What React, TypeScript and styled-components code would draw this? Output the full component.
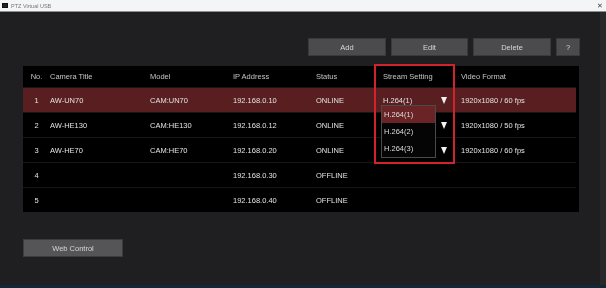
import React from "react";
import styled, { createGlobalStyle } from "styled-components";

const Global = createGlobalStyle`
  html, body { margin: 0; padding: 0; background: #1f1f21; }
  body { font-family: "Liberation Sans", Arial, sans-serif; -webkit-font-smoothing: antialiased; }
  * { box-sizing: border-box; }
`;

const Window = styled.div`
  width: 606px;
  height: 288px;
  display: flex;
  flex-direction: column;
  background: #1f1f21;
  overflow: hidden;
  will-change: transform;
`;

const TitleBar = styled.div`
  height: 12px;
  flex: none;
  display: flex;
  align-items: center;
  padding: 0 3px 0 2px;
  background: #f3f5f7;
  border-bottom: 1px solid #8e8e90;
`;

const AppIcon = styled.div`
  width: 6px;
  height: 5px;
  background: #222;
  border: 1px solid #111;
  margin-right: 3px;
`;

const TitleText = styled.span`
  font-size: 5.5px;
  color: #777;
  flex: 1;
`;

const CloseGlyph = styled.span`
  font-size: 7px;
  color: #444;
  line-height: 1;
`;

const Main = styled.div`
  flex: 1;
  display: flex;
  flex-direction: column;
  padding: 26px 21px 0 23px;
  border-right: 6px solid #29292b;
`;

const Toolbar = styled.div`
  display: flex;
  justify-content: flex-end;
  gap: 5px;
  margin-right: -1px;
`;

const Button = styled.div<{ $w: number }>`
  width: ${(p) => p.$w}px;
  height: 18px;
  display: flex;
  align-items: center;
  justify-content: center;
  background: #4b4b4d;
  border: 1px solid #3a3a3c;
  color: #d6d6d6;
  font-size: 7.5px;
`;

const TableWrap = styled.div`
  position: relative;
  margin-top: 10px;
  background: #000;
  padding-right: 3px;
`;

const Row = styled.div<{ $head?: boolean; $sel?: boolean }>`
  display: grid;
  grid-template-columns: 27px 100px 83px 83px 67px 78px 1fr;
  height: ${(p) => (p.$head ? 21 : 25)}px;
  align-items: center;
  font-size: 7.5px;
  color: ${(p) => (p.$head ? "#c4c4c4" : "#e2e2e2")};
  background: ${(p) => (p.$sel ? "#581e20" : "transparent")};
  border-top: ${(p) => (p.$head ? "none" : "1px solid #161616")};
`;

const Cell = styled.div<{ $center?: boolean }>`
  white-space: nowrap;
  text-align: ${(p) => (p.$center ? "center" : "left")};
`;

const StreamCell = styled.div`
  position: relative;
  align-self: stretch;
  display: flex;
  align-items: center;
  width: 64px;
  white-space: nowrap;
`;

const Arrow = styled.span`
  margin-left: auto;
  width: 0;
  height: 0;
  border-left: 3.5px solid transparent;
  border-right: 3.5px solid transparent;
  border-top: 7px solid #f2f2f2;
`;

const Dropdown = styled.div`
  position: absolute;
  left: -2px;
  top: 17px;
  width: 55px;
  background: #050505;
  border: 1px solid #4a4a4a;
  z-index: 2;
`;

const Option = styled.div<{ $active?: boolean }>`
  height: 17px;
  display: flex;
  align-items: center;
  padding-left: 2px;
  font-size: 7.5px;
  color: #dcdcdc;
  background: ${(p) => (p.$active ? "#6a2426" : "transparent")};
`;

const Highlight = styled.div`
  position: absolute;
  left: 351px;
  top: -2px;
  width: 81px;
  height: 100px;
  border: 2px solid #d0232c;
  pointer-events: none;
  z-index: 3;
`;

const Footer = styled.div`
  margin-top: 27px;
  display: flex;
`;

const WebButton = styled(Button)`
  background: #555557;
  border-color: #3c3c3e;
`;

const BottomLine = styled.div`
  height: 3px;
  flex: none;
  background: #0f2737;
`;

type Cam = { no: number; title: string; model: string; ip: string; status: string; stream: string; fmt: string; arrow: boolean };

const cams: Cam[] = [
  { no: 1, title: "AW-UN70", model: "CAM:UN70", ip: "192.168.0.10", status: "ONLINE", stream: "H.264(1)", fmt: "1920x1080 / 60 fps", arrow: true },
  { no: 2, title: "AW-HE130", model: "CAM:HE130", ip: "192.168.0.12", status: "ONLINE", stream: "", fmt: "1920x1080 / 50 fps", arrow: true },
  { no: 3, title: "AW-HE70", model: "CAM:HE70", ip: "192.168.0.20", status: "ONLINE", stream: "", fmt: "1920x1080 / 60 fps", arrow: true },
  { no: 4, title: "", model: "", ip: "192.168.0.30", status: "OFFLINE", stream: "", fmt: "", arrow: false },
  { no: 5, title: "", model: "", ip: "192.168.0.40", status: "OFFLINE", stream: "", fmt: "", arrow: false },
];

export default function App() {
  return (
    <>
      <Global />
      <Window>
        <TitleBar>
          <AppIcon />
          <TitleText>PTZ Virtual USB</TitleText>
          <CloseGlyph>✕</CloseGlyph>
        </TitleBar>
        <Main>
          <Toolbar>
            <Button $w={78}>Add</Button>
            <Button $w={77}>Edit</Button>
            <Button $w={78}>Delete</Button>
            <Button $w={24}>?</Button>
          </Toolbar>
          <TableWrap>
            <Row $head>
              <Cell $center>No.</Cell>
              <Cell>Camera Title</Cell>
              <Cell>Model</Cell>
              <Cell>IP Address</Cell>
              <Cell>Status</Cell>
              <Cell>Stream Setting</Cell>
              <Cell>Video Format</Cell>
            </Row>
            {cams.map((c, i) => (
              <Row key={c.no} $sel={i === 0}>
                <Cell $center>{c.no}</Cell>
                <Cell>{c.title}</Cell>
                <Cell>{c.model}</Cell>
                <Cell>{c.ip}</Cell>
                <Cell>{c.status}</Cell>
                <StreamCell>
                  {c.stream}
                  {c.arrow && <Arrow />}
                  {i === 0 && (
                    <Dropdown>
                      <Option $active>H.264(1)</Option>
                      <Option>H.264(2)</Option>
                      <Option>H.264(3)</Option>
                    </Dropdown>
                  )}
                </StreamCell>
                <Cell>{c.fmt}</Cell>
              </Row>
            ))}
            <Highlight />
          </TableWrap>
          <Footer>
            <WebButton $w={100}>Web Control</WebButton>
          </Footer>
        </Main>
        <BottomLine />
      </Window>
    </>
  );
}
